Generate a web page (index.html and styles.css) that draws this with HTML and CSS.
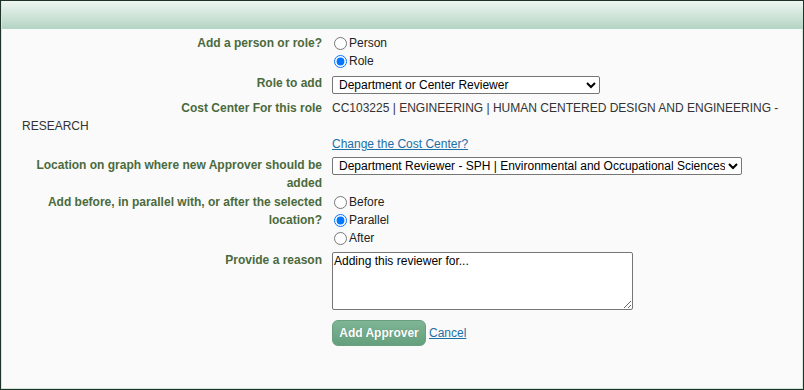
FILE: index.html
```html
<!DOCTYPE html>
<html>
<head>
<meta charset="utf-8">
<link rel="stylesheet" href="styles.css">
</head>
<body>
<div class="frame">
  <div class="header"></div>
  <div class="content">
    <div class="row">
      <div class="label">Add a person or role?</div>
      <div class="value">
        <label class="opt"><input type="radio" name="who"> Person</label>
        <label class="opt"><input type="radio" name="who" checked> Role</label>
      </div>
    </div>
    <div class="row row-select">
      <div class="label">Role to add</div>
      <div class="value">
        <select class="sel sel-role"><option>Department or Center Reviewer</option></select>
      </div>
    </div>
    <div class="row-flow">
      <div class="label flt">Cost Center For this role</div>
      <span class="cc">CC103225 | ENGINEERING | HUMAN CENTERED DESIGN AND ENGINEERING -</span>
      <span class="cc">RESEARCH</span>
      <div class="change"><a href="#">Change the Cost Center?</a></div>
    </div>
    <div class="row row-loc">
      <div class="label">Location on graph where new Approver should be added</div>
      <div class="value">
        <select class="sel sel-loc"><option>Department Reviewer - SPH | Environmental and Occupational Sciences</option></select>
      </div>
    </div>
    <div class="row row-when">
      <div class="label">Add before, in parallel with, or after the selected location?</div>
      <div class="value">
        <label class="opt"><input type="radio" name="when"> Before</label>
        <label class="opt"><input type="radio" name="when" checked> Parallel</label>
        <label class="opt"><input type="radio" name="when"> After</label>
      </div>
    </div>
    <div class="row row-reason">
      <div class="label">Provide a reason</div>
      <div class="value">
        <textarea class="reason">Adding this reviewer for...</textarea>
      </div>
    </div>
    <div class="row actions">
      <div class="label"></div>
      <div class="value buttons">
        <button class="btn" type="button">Add Approver</button>
        <a href="#" class="cancel">Cancel</a>
      </div>
    </div>
  </div>
</div>
</body>
</html>
```

FILE: styles.css
```css
* { box-sizing: border-box; }
html, body { margin: 0; padding: 0; background: #ffffff; }
body {
  font-family: "Liberation Sans", Arial, sans-serif;
  font-size: 12px;
  color: #333;
}
.frame {
  width: 804px;
  height: 390px;
  border: 1px solid #1d3328;
  background: #fafafa;
  display: flex;
  flex-direction: column;
}
.header {
  height: 28px;
  background: linear-gradient(#eef6f2, #b3d4c3);
  border-left: 1px solid #d6e8de;
}
.content {
  flex: 1;
  padding: 5px 20px 0 20px;
  border-left: 1px solid #d6e8de;
  border-right: 1px solid #d6e8de;
  border-bottom: 1px solid #cfe3d8;
  line-height: 18px;
}
.row {
  display: flex;
  align-items: flex-start;
  margin-bottom: 4px;
}
.label {
  width: 300px;
  flex: none;
  text-align: right;
  font-weight: bold;
  color: #4b6a3c;
  padding-left: 10px;
}
.value {
  margin-left: 10px;
  display: flex;
  flex-direction: column;
  align-items: flex-start;
}
.opt {
  display: flex;
  align-items: center;
  height: 18px;
  font-size: 12px;
  color: #222;
}
.opt input {
  width: 13px;
  height: 13px;
  margin: 0 2px 0 2px;
}
.sel {
  font-family: "Liberation Sans", Arial, sans-serif;
  font-size: 12px;
  height: 18px;
  padding: 0 0 0 2px;
  border: 1px solid #767676;
  border-radius: 2px;
  background: #fff;
  color: #000;
  margin-top: 2px;
}
.sel-role { width: 268px; }
.sel-loc { width: 410px; }
.row-select { margin-bottom: 5px; }
.row-flow {
  margin-bottom: 3px;
  color: #333;
}
.row-flow::after { content: ""; display: block; clear: both; }
.flt { float: left; margin-right: 10px; }
.change { margin-left: 310px; }
a {
  color: #1d6fa5;
  text-decoration: underline;
}
.row-loc { margin-bottom: 1px; }
.row-loc .sel { margin-top: 1px; }
.row-when { margin-bottom: 4px; margin-top: 0; }
.reason {
  width: 301px;
  height: 58px;
  border: 1px solid #767676;
  border-radius: 2px;
  font-family: "Liberation Sans", Arial, sans-serif;
  font-size: 12px;
  line-height: 14px;
  padding: 1px;
  color: #000;
  background: #fff;
  margin-top: 1px;
}
.row-reason { margin-bottom: 10px; }
.buttons {
  flex-direction: row;
  align-items: center;
  gap: 3px;
}
.btn {
  width: 94px;
  height: 26px;
  border: 1px solid #6a9e80;
  border-radius: 6px;
  background: linear-gradient(#7fb595, #64a07d);
  color: #fff;
  font-family: "Liberation Sans", Arial, sans-serif;
  font-weight: bold;
  font-size: 12px;
  padding: 0;
  text-shadow: 0 0 1px rgba(0,0,0,0.25);
}
.cancel { font-size: 12px; }
```
